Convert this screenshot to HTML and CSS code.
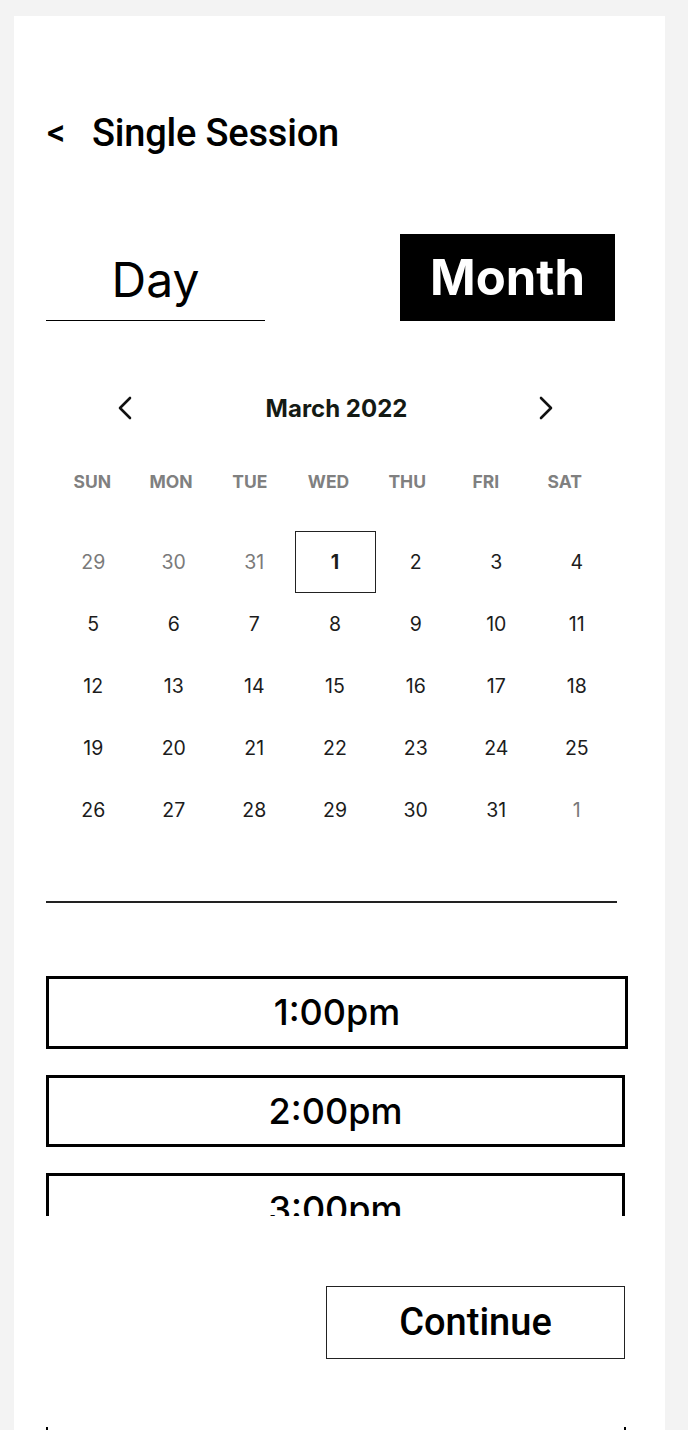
FILE: index.html
```html
<!DOCTYPE html>
<html lang="en">
<head>
    <meta charset="UTF-8">
    <meta name="viewport" content="width=device-width, initial-scale=1.0">
    <title>Single Session</title>
    <link rel="stylesheet" href="styles.css">
</head>
<body>
    <div class="screen">
        <div class="page-header">
            <span class="back">&lt;</span>
            <h1>Single Session</h1>
        </div>

        <div class="view-tabs">
            <div class="tab tab-day">Day</div>
            <div class="tab tab-month">Month</div>
        </div>

        <div class="calendar">
            <div class="cal-nav">
                <svg class="chevron" width="14" height="24" viewBox="0 0 14 24"><path d="M12 2 L2 12 L12 22" fill="none" stroke="#111" stroke-width="2.6" stroke-linecap="round" stroke-linejoin="round"/></svg>
                <span class="cal-title">March 2022</span>
                <svg class="chevron" width="14" height="24" viewBox="0 0 14 24"><path d="M2 2 L12 12 L2 22" fill="none" stroke="#111" stroke-width="2.6" stroke-linecap="round" stroke-linejoin="round"/></svg>
            </div>
            <div class="weekdays">
                <span>SUN</span><span>MON</span><span>TUE</span><span>WED</span><span>THU</span><span>FRI</span><span>SAT</span>
            </div>
            <div class="days">
                <span class="muted">29</span><span class="muted">30</span><span class="muted">31</span><span class="selected">1</span><span>2</span><span>3</span><span>4</span>
                <span>5</span><span>6</span><span>7</span><span>8</span><span>9</span><span>10</span><span>11</span>
                <span>12</span><span>13</span><span>14</span><span>15</span><span>16</span><span>17</span><span>18</span>
                <span>19</span><span>20</span><span>21</span><span>22</span><span>23</span><span>24</span><span>25</span>
                <span>26</span><span>27</span><span>28</span><span>29</span><span>30</span><span>31</span><span class="muted">1</span>
            </div>
        </div>

        <div class="divider"></div>

        <div class="slots">
            <div class="slot slot-first">1:00pm</div>
            <div class="slot">2:00pm</div>
            <div class="slot">3:00pm</div>
        </div>

        <div class="actions">
            <button class="continue-btn">Continue</button>
        </div>

        <div class="next-block"></div>
    </div>
</body>
</html>
```

FILE: styles.css
```css
body {
    margin: 0;
    padding: 0;
    background-color: #f3f3f3;
    font-family: 'Inter', 'Roboto', sans-serif;
    color: #000;
    overflow: hidden;
}
.screen {
    width: 651px;
    min-height: 1414px;
    margin: 16px 0 0 14px;
    padding: 97px 32px 0 32px;
    box-sizing: border-box;
    background-color: #fff;
}
.page-header {
    display: flex;
    align-items: center;
    height: 40px;
}
.back {
    font-family: 'Roboto', sans-serif;
    font-weight: 500;
    font-size: 36px;
    margin-left: 1px;
    width: 45px;
}
h1 {
    margin: 0;
    font-family: 'Roboto', sans-serif;
    font-weight: 500;
    font-size: 38px;
    letter-spacing: -0.2px;
}
.view-tabs {
    display: flex;
    justify-content: space-between;
    margin-top: 81px;
    width: 569px;
}
.tab {
    height: 87px;
    display: flex;
    align-items: center;
    justify-content: center;
    font-size: 48px;
    box-sizing: border-box;
}
.tab-day {
    width: 219px;
    border-bottom: 1.5px solid #000;
    font-weight: 400;
    padding-top: 4px;
}
.tab-month {
    width: 215px;
    background-color: #000;
    color: #fff;
    font-weight: 700;
    font-size: 49px;
}
.calendar {
    width: 564px;
    margin: 67px 0 0 7px;
}
.cal-nav {
    display: flex;
    align-items: center;
    justify-content: space-between;
    height: 40px;
    padding: 0 64px 0 65px;
}
.cal-title {
    font-size: 24px;
    font-weight: 700;
    color: #141a14;
    margin-left: 2px;
}
.weekdays {
    display: grid;
    grid-template-columns: repeat(7, 1fr);
    width: 551px;
    height: 30px;
    margin-top: 38px;
    align-items: center;
    text-align: center;
    font-size: 17.5px;
    font-weight: 700;
    color: #808080;
}
.days {
    display: grid;
    grid-template-columns: repeat(7, 1fr);
    grid-auto-rows: 62px;
    margin-top: 35px;
    font-size: 19.5px;
    color: #1c1c1c;
}
.days span {
    display: flex;
    align-items: center;
    justify-content: center;
}
.days .muted {
    color: #7a7a7a;
}
.days .selected {
    border: 1.5px solid #222;
    font-weight: 700;
    box-sizing: border-box;
    width: 81px;
    justify-self: center;
}
.divider {
    width: 571px;
    height: 1.5px;
    background-color: #222;
    margin-top: 60px;
}
.slots {
    margin-top: 73px;
    height: 240px;
    overflow: hidden;
    display: flex;
    flex-direction: column;
    gap: 26px;
}
.slot {
    flex: none;
    width: 579px;
    height: 72px;
    border: 3px solid #000;
    box-sizing: border-box;
    display: flex;
    align-items: center;
    justify-content: center;
    font-size: 36px;
    font-weight: 500;
}
.slot-first {
    width: 582px;
    height: 73px;
}
.actions {
    display: flex;
    justify-content: flex-end;
    width: 579px;
    margin-top: 70px;
}
.continue-btn {
    width: 299px;
    height: 73px;
    background: #fff;
    border: 1.5px solid #222;
    font-family: 'Roboto', sans-serif;
    font-weight: 500;
    font-size: 38px;
    line-height: 1;
    color: #000;
    padding: 0;
    cursor: pointer;
}
.next-block {
    width: 580px;
    height: 40px;
    margin-top: 68px;
    border-left: 2px solid #000;
    border-right: 2px solid #000;
    box-sizing: border-box;
}
```
